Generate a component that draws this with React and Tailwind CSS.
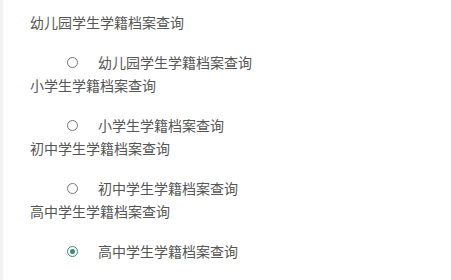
import React from 'react';

const items = [
  { title: '幼儿园学生学籍档案查询', checked: false },
  { title: '小学生学籍档案查询', checked: false },
  { title: '初中学生学籍档案查询', checked: false },
  { title: '高中学生学籍档案查询', checked: true },
];

function Radio({ checked }) {
  if (checked) {
    return (
      <span className="flex h-[11px] w-[11px] items-center justify-center rounded-full border border-[#3c8a74]">
        <span className="h-[5px] w-[5px] rounded-full bg-[#3c8a74]" />
      </span>
    );
  }
  return <span className="block h-[11px] w-[11px] rounded-full border border-[#777]" />;
}

export default function App() {
  return (
    <div
      className="min-h-[280px] w-[451px] border-l-[3px] border-[#f3f3f3] bg-white pt-[11px] text-[14px] text-[#555]"
      style={{ fontFamily: '"Noto Sans CJK SC", "Noto Sans", sans-serif' }}
    >
      {items.map((it) => (
        <div key={it.title}>
          <div className="h-[23px] pl-[27px] leading-[23px]">{it.title}</div>
          <div className="mt-[16px] flex h-[24px] items-center">
            <span className="ml-[64px] mr-[20px]">
              <Radio checked={it.checked} />
            </span>
            <span className="leading-[24px]">{it.title}</span>
          </div>
        </div>
      ))}
    </div>
  );
}
